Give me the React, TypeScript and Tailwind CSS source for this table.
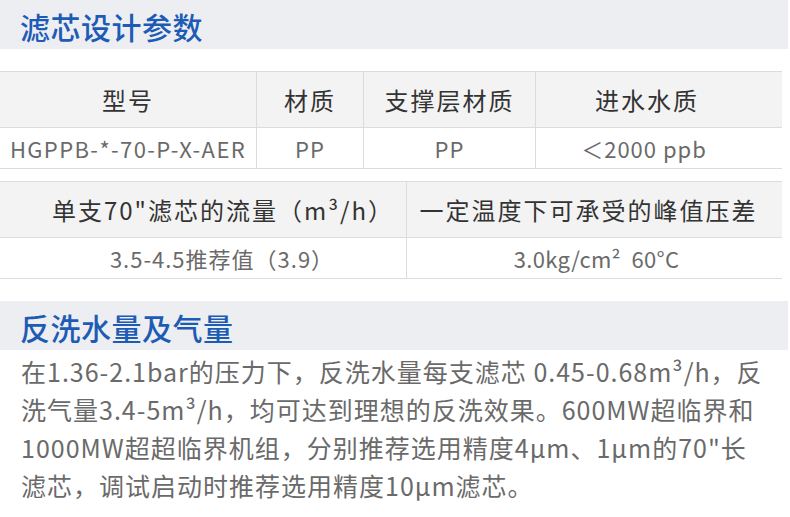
export default function App() {
  const font = { fontFamily: '"Noto Sans CJK SC", "Noto Sans", sans-serif' }

  const head = 'h-[56px] bg-[#f3f3f3] flex items-center justify-center text-[24px] tracking-[2px] text-[#333] border-b border-[#dcdcdc]'
  const cell = 'h-[41px] flex items-center justify-center text-[22px] text-[#6a6a6a] border-b border-[#dcdcdc]'

  return (
    <div className="w-[790px] h-[517px] bg-white overflow-hidden flex flex-col" style={font}>
      {/* 标题 1 */}
      <div className="h-[49px] w-[788px] bg-[#eceef2] flex items-center pl-[20px] pt-[2px]">
        <h2 className="text-[30px] tracking-[0.5px] font-medium text-[#1d5bb5] leading-none">滤芯设计参数</h2>
      </div>

      {/* 表格 1 */}
      <div className="mt-[22px] w-[782px] grid grid-cols-[257px_107px_172px_246px] border-t border-[#dcdcdc]">
        <div className={`${head} border-r`}>型号</div>
        <div className={`${head} border-r`}>材质</div>
        <div className={`${head} border-r`}>支撑层材质</div>
        <div className={`${head} pr-[24px]`}>进水水质</div>
        <div className={`${cell} tracking-[1.4px] border-r`}>HGPPB-*-70-P-X-AER</div>
        <div className={`${cell} tracking-[1px] border-r`}>PP</div>
        <div className={`${cell} tracking-[1px] border-r`}>PP</div>
        <div className={`${cell} tracking-[1px] pr-[30px]`}>＜2000 ppb</div>
      </div>

      {/* 表格 2 */}
      <div className="mt-[12px] w-[782px] grid grid-cols-[407px_375px] border-t border-[#dcdcdc]">
        <div className={`${head} border-r pl-[40px]`}>单支70"滤芯的流量（m³/h）</div>
        <div className={`${head} pr-[12px]`}>一定温度下可承受的峰值压差</div>
        <div className={`${cell} tracking-[1px] border-r pl-[38px]`}>3.5-4.5推荐值（3.9）</div>
        <div className={`${cell} tracking-[0.3px] pl-[4px]`}>3.0kg/cm²&nbsp; 60°C</div>
      </div>

      {/* 标题 2 */}
      <div className="mt-[22px] h-[49px] w-[788px] bg-[#eceef2] flex items-center pl-[20px] pt-[2px]">
        <h2 className="text-[30px] tracking-[0.5px] font-medium text-[#1d5bb5] leading-none">反洗水量及气量</h2>
      </div>

      {/* 说明 */}
      <div className="pl-[21px] pt-[2px] text-[25px] tracking-[1px] leading-[38px] text-[#6a6a6a] whitespace-nowrap">
        <p>在1.36-2.1bar的压力下，反洗水量每支滤芯 0.45-0.68m³/h，反</p>
        <p>洗气量3.4-5m³/h，均可达到理想的反洗效果。600MW超临界和</p>
        <p>1000MW超超临界机组，分别推荐选用精度4µm、1µm的70"长</p>
        <p>滤芯，调试启动时推荐选用精度10µm滤芯。</p>
      </div>
    </div>
  )
}
